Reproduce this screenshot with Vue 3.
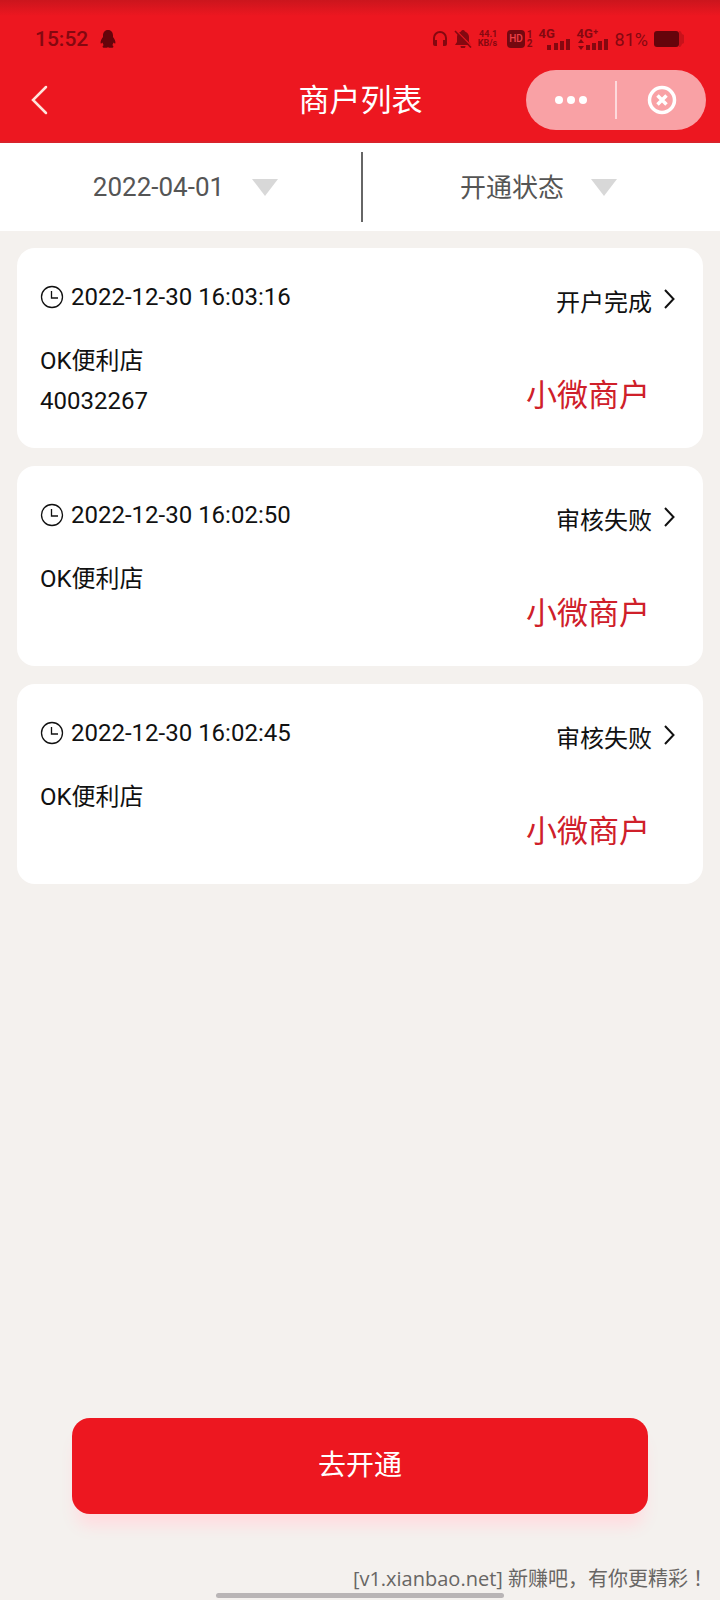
<script setup>
import { ref } from 'vue'

const status = ref('all')
const merchants = [
  { time: '2022-12-30 16:03:16', state: '开户完成', name: 'OK便利店', code: '40032267', kind: '小微商户' },
  { time: '2022-12-30 16:02:50', state: '审核失败', name: 'OK便利店', code: '', kind: '小微商户' },
  { time: '2022-12-30 16:02:45', state: '审核失败', name: 'OK便利店', code: '', kind: '小微商户' },
]
</script>

<template>
  <div class="page">
    <header class="top">
      <div class="statusbar">
        <span class="clock">15:52</span>
        <svg class="penguin" width="16" height="20" viewBox="0 0 16 20" aria-hidden="true">
          <path d="M8 1C4.600 1 3 3.500 3 6.500v1.500C1.500 10 .4 12 .6 14c.1 1 1 .6 2-.6.2 1.300.6 2 1.200 2.700-1 .5-1.500 1.300-1 2.200.3.800 3.800.7 5.200-.1 1.400.8 4.900.9 5.200.1.500-.9 0-1.700-1-2.200.6-.7 1-1.400 1.200-2.700 1 1.200 1.900 1.600 2 .6.200-2-.9-4-2.400-6V6.500C13 3.500 11.400 1 8 1z" />
        </svg>
        <div class="indicators">
          <svg width="16" height="18" viewBox="0 0 16 18" aria-hidden="true">
            <path d="M2 12V8a6 6 0 0 1 12 0v4" fill="none" stroke="currentColor" stroke-width="2" />
            <path d="M1 10h4v6H3a2 2 0 0 1-2-2zM15 10h-4v6h2a2 2 0 0 0 2-2z" />
          </svg>
          <svg width="18" height="18" viewBox="0 0 18 18" aria-hidden="true">
            <path d="M9 0a2 2 0 0 1 2 1.500C13.500 2.500 15 4.500 15 7v5l2 3H1l2-3V7c0-2.500 1.500-4.500 4-5.500A2 2 0 0 1 9 0zM6.500 16h5a2.500 2.500 0 0 1-5 0z" />
            <path d="M2 0.500L17.500 16" fill="none" stroke="#ed1720" stroke-width="1.200" />
            <path d="M1 1l16 16.500" fill="none" stroke="currentColor" stroke-width="1.600" />
          </svg>
          <div class="stack rate"><span>44.1</span><span>KB/s</span></div>
          <div class="hd">
            <span class="hd-box">HD</span>
            <div class="stack sim"><span>1</span><span>2</span></div>
          </div>
          <div class="signal">
            <span>4G</span>
            <svg width="24" height="11" viewBox="0 0 24 11" aria-hidden="true">
              <path d="M0 6h4v5H0zM7 4h4v7H7zM13 2h4v9h-4zM19 0h4v11h-4z" />
            </svg>
          </div>
          <div class="signal">
            <span>4G⁺</span>
            <svg width="31" height="11" viewBox="0 0 31 11" aria-hidden="true">
              <path d="M3 0l3 4H0zM3 11L0 7h6zM8 6h4v5H8zM14 4h4v7h-4zM20 2h4v9h-4zM26 0h4v11h-4z" />
            </svg>
          </div>
          <span class="percent">81%</span>
          <svg width="31" height="16" viewBox="0 0 31 16" aria-hidden="true">
            <path d="M25 0h1q1 0 2 3l2 1v8l-2 1q-1 3-2 3h-1z" opacity=".35" />
            <rect class="charge" width="25" height="16" rx="3" />
          </svg>
        </div>
      </div>
      <div class="titlebar">
        <button class="back" type="button" aria-label="返回">
          <svg width="18" height="30" viewBox="0 0 18 30">
            <path d="M15 2L2 15l13 13" fill="none" stroke="currentColor" stroke-width="2.500" stroke-linecap="round" />
          </svg>
        </button>
        <h1>商户列表</h1>
        <div class="capsule">
          <button type="button" aria-label="更多">
            <svg width="32" height="10" viewBox="0 0 32 10">
              <circle cx="4" cy="5" r="4" /><circle cx="16" cy="5" r="4" /><circle cx="28" cy="5" r="4" />
            </svg>
          </button>
          <i class="split"></i>
          <button type="button" aria-label="关闭">
            <svg width="30" height="30" viewBox="0 0 30 30">
              <circle cx="15" cy="15" r="12.500" fill="none" stroke="currentColor" stroke-width="3.500" />
              <path d="M10.500 10.500l9 9M19.500 10.500l-9 9" stroke="currentColor" stroke-width="3.500" />
            </svg>
          </button>
        </div>
      </div>
    </header>

    <div class="filters">
      <button class="filter date" type="button">
        <span>2022-04-01</span>
        <svg class="caret" width="26" height="17" viewBox="0 0 26 17"><path d="M0 0h26L13 17z" /></svg>
      </button>
      <i class="divider"></i>
      <label class="filter opened">
        <select v-model="status" aria-label="开通状态">
          <option value="all">开通状态</option>
        </select>
        <svg class="caret" width="26" height="17" viewBox="0 0 26 17"><path d="M0 0h26L13 17z" /></svg>
      </label>
    </div>

    <main class="list">
      <article v-for="item in merchants" :key="item.time" class="card">
        <div class="info">
          <div class="time">
            <svg width="24" height="24" viewBox="0 0 24 24" aria-hidden="true">
              <path d="M12 1.500a10.500 10.500 0 1 0 0 21a10.500 10.500 0 0 0 0-21M11.500 6v7H18" fill="none" stroke="currentColor" stroke-width="1.300" />
            </svg>
            <time>{{ item.time }}</time>
          </div>
          <p class="name">{{ item.name }}</p>
          <p class="code">{{ item.code }}</p>
        </div>
        <div class="side">
          <button class="state" type="button">
            <span>{{ item.state }}</span>
            <svg width="12" height="28" viewBox="0 0 12 28" aria-hidden="true">
              <path d="M1 5l8.500 9-8.500 9" fill="none" stroke="currentColor" stroke-width="2" />
            </svg>
          </button>
          <p class="kind">{{ item.kind }}</p>
        </div>
      </article>
    </main>

    <footer class="bottom">
      <button class="open" type="button">去开通</button>
      <p class="mark">[v1.xianbao.net] 新赚吧，有你更精彩<span class="bang">！</span></p>
      <i class="home"></i>
    </footer>
  </div>
</template>

<style>
body {
  background: #f4f1ee;
}
</style>

<style scoped>
* {
  box-sizing: border-box;
}
.page {
  min-height: 100vh;
  display: flex;
  flex-direction: column;
  background: #f4f1ee;
  color: #111;
  font-family: Roboto, "Noto Sans CJK SC", sans-serif;
}
button,
select {
  font: inherit;
  color: inherit;
  background: none;
  border: 0;
  padding: 0;
  margin: 0;
}
p,
h1 {
  margin: 0;
  font-weight: 400;
}
svg {
  display: block;
  flex: none;
  fill: currentColor;
}
.top {
  height: 143px;
  background: linear-gradient(#cb151d, #ed1720 16px);
  border-bottom: 2px solid #d9222a;
}
.statusbar {
  height: 68px;
  display: flex;
  align-items: center;
  padding: 10px 35px 0;
  color: #850810;
}
.clock {
  font-size: 21px;
  line-height: 24px;
  font-weight: 500;
}
.penguin {
  margin-left: 12px;
  color: #65040b;
}
.indicators {
  margin-left: auto;
  display: flex;
  align-items: center;
  gap: 6px;
}
.stack {
  display: flex;
  flex-direction: column;
  font-weight: 700;
  line-height: 9px;
}
.rate {
  font-size: 9px;
  align-items: flex-end;
}
.hd {
  display: flex;
  align-items: center;
  gap: 2px;
  margin-left: 4px;
}
.hd-box {
  padding: 0 2px;
  border-radius: 4px;
  background: #740810;
  color: #ed4048;
  font-size: 10px;
  line-height: 18px;
  font-weight: 500;
}
.sim {
  font-size: 10px;
}
.signal {
  width: 32px;
  height: 20px;
  display: flex;
  flex-direction: column;
  align-items: flex-end;
  font-size: 13px;
  line-height: 10px;
  font-weight: 700;
}
.signal span {
  align-self: flex-start;
}
.percent {
  font-size: 18px;
}
.charge {
  fill: #65040b;
}
.titlebar {
  height: 63px;
  display: grid;
  grid-template-columns: 1fr auto 1fr;
  align-items: center;
  padding: 0 14px 0 31px;
  color: #fff;
}
.back {
  justify-self: start;
  color: #ffe4dc;
}
.titlebar h1 {
  padding: 3px 16px 0 0;
  font-size: 31px;
  line-height: 40px;
}
.capsule {
  justify-self: end;
  width: 180px;
  height: 60px;
  border-radius: 30px;
  background: #f9a1a5;
  display: flex;
  align-items: center;
}
.capsule button {
  flex: 1;
  height: 60px;
  display: flex;
  align-items: center;
  justify-content: center;
}
.split {
  width: 2px;
  height: 38px;
  background: #fddadc;
}
.filters {
  height: 88px;
  display: flex;
  align-items: center;
  background: #fff;
  color: #555;
}
.filter {
  flex: 1;
  height: 60px;
  display: flex;
  align-items: center;
  justify-content: center;
  gap: 28px;
  font-size: 26px;
  line-height: 36px;
}
.date {
  padding-left: 10px;
}
.opened {
  gap: 26px;
  padding-right: 6px;
}
.filter select {
  appearance: none;
  height: 38px;
  padding-top: 2px;
}
.caret {
  color: #d8d8d8;
}
.divider {
  width: 2px;
  height: 70px;
  background: #666;
}
.list {
  flex: 1;
  display: flex;
  flex-direction: column;
  gap: 18px;
  padding: 17px;
}
.card {
  min-height: 200px;
  display: flex;
  justify-content: space-between;
  padding: 31px 27px 24px 23px;
  border-radius: 18px;
  background: #fff;
  font-size: 24px;
  line-height: 36px;
}
.time {
  display: flex;
  align-items: center;
  gap: 7px;
}
.name {
  margin-top: 28px;
}
.code {
  margin-top: 4px;
}
.side {
  display: flex;
  flex-direction: column;
  align-items: flex-end;
  padding-top: 6px;
}
.state {
  display: flex;
  align-items: flex-start;
  gap: 12px;
}
.kind {
  margin: 53px 26px 0 0;
  font-size: 31px;
  line-height: 44px;
  color: #cf202a;
}
.bottom {
  display: flex;
  flex-direction: column;
  align-items: center;
}
.open {
  width: calc(100% - 144px);
  height: 96px;
  padding-bottom: 6px;
  border-radius: 18px;
  background: #ed1720;
  box-shadow: 0 16px 16px -4px #ffdce0;
  color: #fff;
  font-size: 28px;
}
.mark {
  align-self: flex-end;
  margin: 50px 12px 0 0;
  font-family: "Open Sans", "Noto Sans CJK SC", sans-serif;
  font-size: 20px;
  line-height: 28px;
  color: #686664;
}
.bang {
  font-family: "Noto Sans CJK TC", sans-serif;
}
.home {
  width: 40%;
  height: 5px;
  border-radius: 3px;
  background: #b9b5b6;
  margin-bottom: 2px;
}
</style>
